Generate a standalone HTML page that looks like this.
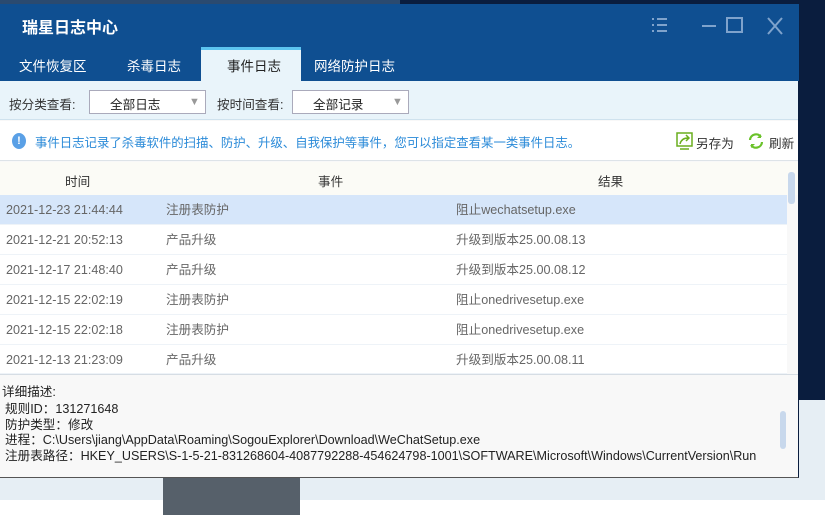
<!DOCTYPE html>
<html><head><meta charset="utf-8"><style>
*{margin:0;padding:0;box-sizing:border-box}
body{width:825px;height:515px;overflow:hidden;position:relative;background:#fff;font-family:"Liberation Sans","Noto Sans CJK SC",sans-serif;font-size:12px;color:#333}
.a{position:absolute}
.row{position:absolute;left:0;width:787px;height:30px;border-bottom:1px solid #eef3f8;color:#666;font-size:12.6px;line-height:30px;background:#fff}
.row span{position:absolute}
</style></head><body>
<div class="a" style="left:0;top:0;width:825px;height:400px;background:#0a1d3e"></div>
<div class="a" style="left:798px;top:400px;width:27px;height:100px;background:#e6eef4"></div>
<div class="a" style="left:0;top:477px;width:825px;height:23px;background:#e6eef4"></div>
<div class="a" style="left:163px;top:477px;width:137px;height:38px;background:#56606a"></div>
<div class="a" style="left:0;top:500px;width:163px;height:15px;background:#fff"></div>
<div class="a" style="left:0;top:0;width:400px;height:4px;background:#2a4a70"></div>
<div class="a" style="left:0;top:4px;width:799px;height:474px;background:#f8f8f8;border-right:1px solid #0a1d3e;border-bottom:1px solid #555"></div>
<div class="a" style="left:0;top:4px;width:799px;height:77px;background:#0f4f91"></div>
<div class="a" style="left:22px;top:14px;color:#fff;font-size:16px;font-weight:bold">瑞星日志中心</div>
<svg class="a" style="left:648px;top:15px" width="140" height="22" viewBox="0 0 140 22">
<g stroke="#7fa3cc" stroke-width="2" fill="none">
<path d="M4 4h2M4 10h2M4 16h2M9 4h10M9 10h10M9 16h10"/>
<path d="M54 11h14"/>
<rect x="79" y="3" width="15" height="14"/>
<path d="M120 3l14 16M134 3l-14 16"/>
</g></svg>
<div class="a" style="left:201px;top:47px;width:100px;height:34px;background:#e9f4fa;border-top:3px solid #5cc4f0"></div>
<div class="a" style="left:19px;top:55px;color:#fff;font-size:13.5px">文件恢复区</div>
<div class="a" style="left:127px;top:55px;color:#fff;font-size:13.5px">杀毒日志</div>
<div class="a" style="left:227px;top:55px;color:#222;font-size:13.5px">事件日志</div>
<div class="a" style="left:314px;top:55px;color:#fff;font-size:13.5px">网络防护日志</div>
<div class="a" style="left:0;top:81px;width:798px;height:39px;background:#e9f4fa;border-bottom:1px solid #cfe2ee"></div>
<div class="a" style="left:9px;top:94px;font-size:12.6px">按分类查看:</div>
<div class="a" style="left:89px;top:90px;width:117px;height:24px;background:#fff;border:1px solid #aab"></div>
<div class="a" style="left:110px;top:94px;font-size:12.6px;color:#222">全部日志</div>
<div class="a" style="left:189px;top:96px;font-size:11px;color:#999">▼</div>
<div class="a" style="left:217px;top:94px;font-size:12.6px">按时间查看:</div>
<div class="a" style="left:292px;top:90px;width:117px;height:24px;background:#fff;border:1px solid #aab"></div>
<div class="a" style="left:313px;top:94px;font-size:12.6px;color:#222">全部记录</div>
<div class="a" style="left:392px;top:96px;font-size:11px;color:#999">▼</div>
<div class="a" style="left:0;top:121px;width:798px;height:40px;background:#fff;border-bottom:1px solid #dde3e8"></div>
<div class="a" style="left:12px;top:133px;width:14px;height:16px;border-radius:50%;background:#5aa0e6;color:#fff;font-size:11px;text-align:center;line-height:16px;font-weight:bold">!</div>
<div class="a" style="left:35px;top:133px;color:#2a8ad8;font-size:12.4px">事件日志记录了杀毒软件的扫描、防护、升级、自我保护等事件，您可以指定查看某一类事件日志。</div>
<svg class="a" style="left:676px;top:132px" width="18" height="18" viewBox="0 0 18 18"><rect x="1" y="1" width="15" height="13" fill="none" stroke="#6aae1e" stroke-width="1.5"/><path d="M4 12c1-4 4-6 8-6M10 3l3 3-3 3" fill="none" stroke="#6aae1e" stroke-width="1.5"/><path d="M4 17h9" stroke="#6aae1e" stroke-width="1.5"/></svg>
<div class="a" style="left:696px;top:133px;font-size:12.6px">另存为</div>
<svg class="a" style="left:748px;top:133px" width="16" height="16" viewBox="0 0 16 16"><path d="M2 7a6 6 0 0 1 11-3M14 9a6 6 0 0 1-11 3" fill="none" stroke="#6ac22a" stroke-width="2.2"/><path d="M13 1v4h-4z M3 15v-4h4z" fill="#6ac22a"/></svg>
<div class="a" style="left:769px;top:133px;font-size:12.6px">刷新</div>
<div class="a" style="left:0;top:162px;width:798px;height:33px;background:#fbfbf6"></div>
<div class="a" style="left:65px;top:171px;font-size:12.6px">时间</div>
<div class="a" style="left:318px;top:171px;font-size:12.6px">事件</div>
<div class="a" style="left:598px;top:171px;font-size:12.6px">结果</div>
<div class="a" style="left:788px;top:172px;width:7px;height:32px;background:#c8d8ec;border-radius:3px"></div>
<div class="row" style="top:195px;background:#d6e6fa"><span style="left:6px">2021-12-23 21:44:44</span><span style="left:166px">注册表防护</span><span style="left:456px">阻止wechatsetup.exe</span></div>
<div class="row" style="top:225px"><span style="left:6px">2021-12-21 20:52:13</span><span style="left:166px">产品升级</span><span style="left:456px">升级到版本25.00.08.13</span></div>
<div class="row" style="top:255px"><span style="left:6px">2021-12-17 21:48:40</span><span style="left:166px">产品升级</span><span style="left:456px">升级到版本25.00.08.12</span></div>
<div class="row" style="top:285px"><span style="left:6px">2021-12-15 22:02:19</span><span style="left:166px">注册表防护</span><span style="left:456px">阻止onedrivesetup.exe</span></div>
<div class="row" style="top:315px"><span style="left:6px">2021-12-15 22:02:18</span><span style="left:166px">注册表防护</span><span style="left:456px">阻止onedrivesetup.exe</span></div>
<div class="row" style="top:345px;height:29px"><span style="left:6px">2021-12-13 21:23:09</span><span style="left:166px">产品升级</span><span style="left:456px">升级到版本25.00.08.11</span></div>
<div class="a" style="left:0;top:374px;width:798px;height:1px;background:#d6dde4"></div>
<div class="a" style="left:2px;top:381px;font-size:12.6px;color:#222">详细描述:</div>
<div class="a" style="left:5px;top:402px;font-size:12.6px;color:#222;line-height:15.5px">规则ID：131271648<br>防护类型：修改<br>进程：C:\Users\jiang\AppData\Roaming\SogouExplorer\Download\WeChatSetup.exe<br>注册表路径：HKEY_USERS\S-1-5-21-831268604-4087792288-454624798-1001\SOFTWARE\Microsoft\Windows\CurrentVersion\Run</div>
<div class="a" style="left:780px;top:411px;width:6px;height:38px;background:#c8d8ec;border-radius:3px"></div>
</body></html>
